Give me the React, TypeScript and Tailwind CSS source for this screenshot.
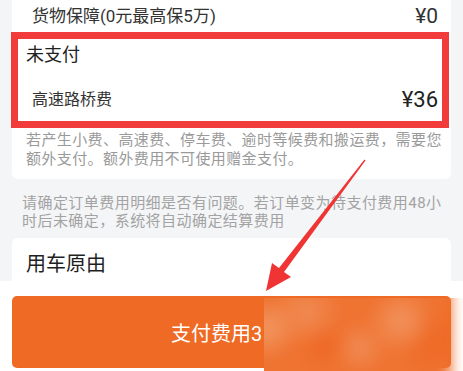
import React from "react";

export default function App() {
  return (
    <div
      className="relative w-[463px] h-[371px] overflow-hidden bg-[#f4f5f7] flex flex-col"
      style={{ fontFamily: "Roboto, 'Noto Sans CJK SC', sans-serif" }}
    >
      {/* Card 1 */}
      <div className="mx-[12px] bg-white rounded-b-[6px] h-[179px] shrink-0 flex flex-col">
        <div className="h-[32px] flex items-center justify-between pl-[20px] pr-[13px] text-[#333] shrink-0">
          <span className="text-[17px] leading-[22px]">货物保障(0元最高保5万)</span>
          <span className="text-[21px] leading-[24px]">¥0</span>
        </div>
        <div className="ml-[-1px] mr-[2px] h-[96px] border-[7px] border-[#f23b3b] flex flex-col shrink-0">
          <div className="mt-[4px] h-[24px] pl-[8px] text-[18px] leading-[24px] text-[#222]">未支付</div>
          <div className="mt-[19px] h-[28px] flex items-center justify-between pl-[14px] pr-[4px]">
            <span className="text-[16px] leading-[22px] text-[#333]">高速路桥费</span>
            <span className="text-[22px] leading-[26px] text-[#222]">¥36</span>
          </div>
        </div>
        <div className="mt-[3px] pl-[14px] text-[15px] leading-[19px] tracking-[0.4px] text-[#9a9a9a] whitespace-nowrap">
          <div>若产生小费、高速费、停车费、逾时等候费和搬运费，需要您</div>
          <div>额外支付。额外费用不可使用赠金支付。</div>
        </div>
      </div>

      {/* Gray info text */}
      <div className="mt-[15px] pl-[22px] text-[15px] leading-[18px] tracking-[0.45px] text-[#a3a3a3] whitespace-nowrap shrink-0">
        <div>请确定订单费用明细是否有问题。若订单变为待支付费用48小</div>
        <div>时后未确定，系统将自动确定结算费用</div>
      </div>

      {/* Card 2 */}
      <div className="mt-[8px] mx-[12px] bg-white rounded-t-[6px] h-[43px] shrink-0 pl-[14px] pt-[12px]">
        <div className="text-[20px] leading-[28px] text-[#1f1f1f]">用车原由</div>
      </div>

      {/* Bottom bar */}
      <div className="flex-1 bg-white pt-[15px] px-[12px]">
        <div className="h-[72px] rounded-[5px] bg-[#ef6a24] flex items-center pl-[159px] pt-[4px]">
          <span className="text-white text-[20px] leading-[26px]">支付费用3</span>
        </div>
      </div>

      {/* Blurred (mosaic) overlay */}
      <div className="absolute left-[264px] top-[298px] w-[199px] h-[73px] overflow-hidden">
        <div
          className="absolute left-[-20px] right-[12px] top-[-20px] bottom-[-20px] blur-[7px]"
          style={{
            background:
              "radial-gradient(circle at 11% 45%, #f29a66 0, rgba(242,154,102,0) 16%)," +
              "radial-gradient(circle at 30% 30%, #f18c55 0, rgba(241,140,85,0) 22%)," +
              "radial-gradient(circle at 38% 58%, #ee6522 0, rgba(238,101,34,0) 18%)," +
              "radial-gradient(circle at 56% 62%, #f18d57 0, rgba(241,141,87,0) 20%)," +
              "radial-gradient(circle at 76% 38%, #f29561 0, rgba(242,149,97,0) 20%)," +
              "radial-gradient(circle at 90% 55%, #ee6622 0, rgba(238,102,34,0) 18%)," +
              "#ef7331",
          }}
        />
      </div>

      {/* Red arrow annotation */}
      <svg
        className="absolute inset-0 pointer-events-none"
        width="463"
        height="371"
        viewBox="0 0 463 371"
      >
        <polygon
          points="266,291 272,263 279,268 364.5,159.5 365.5,160.5 284,272 291,277"
          fill="#f03434"
        />
      </svg>
    </div>
  );
}
